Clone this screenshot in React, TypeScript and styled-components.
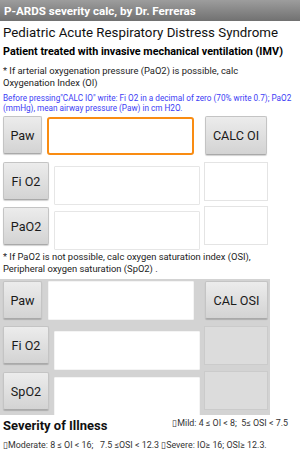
import React from 'react';
import styled, { createGlobalStyle } from 'styled-components';

const GlobalStyle = createGlobalStyle`
    html, body {
        margin: 0;
        padding: 0;
        background: #ffffff;
        font-family: Roboto, "Liberation Sans", sans-serif;
        color: #000;
    }
    * {
        box-sizing: border-box;
    }
`;

const Screen = styled.div`
    width: 300px;
    height: 471px;
    overflow: hidden;
    background: #fff;
`;

const TitleBar = styled.div`
    height: 21px;
    display: flex;
    align-items: center;
    padding: 0 4px;
    background: linear-gradient(#9d9d9d, #717171);
    color: #fff;
    font-weight: bold;
    font-size: 11.6px;
`;

const Content = styled.div`
    padding: 0 3px;
`;

const Heading = styled.div`
    font-size: 13.3px;
    line-height: 18px;
    margin-top: 3px;
    color: #111;
    white-space: nowrap;
`;

const SubHeading = styled.div`
    font-size: 10.8px;
    font-weight: bold;
    line-height: 14px;
    margin-top: 3px;
    white-space: nowrap;
`;

const Note = styled.div<{ $top: number }>`
    font-size: 9.4px;
    line-height: 12px;
    color: #222;
    margin-top: ${(p) => p.$top}px;
`;

const Hint = styled.div`
    font-size: 8.2px;
    line-height: 9.5px;
    color: #3c3cf5;
    margin-top: 5px;
`;

const Row = styled.div<{ $h: number }>`
    display: flex;
    align-items: flex-start;
    height: ${(p) => p.$h}px;
`;

const Button = styled.button<{ $w: number; $ml?: number }>`
    width: ${(p) => p.$w}px;
    height: 38px;
    margin-left: ${(p) => p.$ml ?? 0}px;
    padding: 0;
    flex: none;
    font-family: Roboto, "Liberation Sans", sans-serif;
    font-size: 12.6px;
    color: #1a1a1a;
    background: linear-gradient(#ececec, #d3d3d3);
    border: 1px solid #c4c4c4;
    border-bottom-color: #a9a9a9;
    border-radius: 2px;
    box-shadow: 0 1px 1px rgba(0, 0, 0, 0.18);
`;

const Input = styled.div<{ $w: number; $ml: number; $dy: number; $focus?: boolean; $bare?: boolean }>`
    width: ${(p) => p.$w}px;
    height: 39px;
    flex: none;
    margin-left: ${(p) => p.$ml}px;
    margin-top: ${(p) => p.$dy}px;
    background: #fff;
    border: ${(p) => (p.$focus ? '2px solid #f98c12' : p.$bare ? '1px solid #f4f4f4' : '1px solid #e6e6e6')};
    border-radius: ${(p) => (p.$focus ? '3px' : '1px')};
`;

const Result = styled.div<{ $dy: number; $gray?: boolean }>`
    width: 64px;
    height: 39px;
    flex: none;
    margin-left: 4px;
    margin-top: ${(p) => p.$dy}px;
    background: ${(p) => (p.$gray ? '#dcdcdc' : '#fff')};
    border: 1px solid ${(p) => (p.$gray ? '#cbcbcb' : '#e4e4e4')};
`;

const GrayPanel = styled.div`
    width: 270px;
    margin-left: -3px;
    margin-top: 4px;
    height: 136px;
    padding: 2px 0 0 3px;
    background: #d3d3d3;
    overflow: hidden;
`;

const Footer = styled.div`
    display: flex;
    align-items: flex-start;
    justify-content: space-between;
    margin-top: 2px;
`;

const Severity = styled.div`
    font-size: 13px;
    font-weight: bold;
    color: #111;
    line-height: 18px;
`;

const Small = styled.div<{ $top: number; $right?: number }>`
    font-size: 8.9px;
    line-height: 11px;
    color: #333;
    white-space: pre;
    margin-top: ${(p) => p.$top}px;
    margin-right: ${(p) => p.$right ?? 0}px;
`;

export default function App() {
    return (
        <Screen>
            <GlobalStyle />
            <TitleBar>P-ARDS severity calc, by Dr. Ferreras</TitleBar>
            <Content>
                <Heading>Pediatric Acute Respiratory Distress Syndrome</Heading>
                <SubHeading>Patient treated with invasive mechanical ventilation (IMV)</SubHeading>
                <Note $top={6}>
                    * If arterial oxygenation pressure (PaO2) is possible, calc
                    <br />
                    Oxygenation Index (OI)
                </Note>
                <Hint>
                    Before pressing"CALC IO" write: Fi O2 in a decimal of zero (70% write 0.7); PaO2
                    (mmHg), mean airway pressure (Paw) in cm H2O.
                </Hint>

                <div style={{ height: 3 }} />
                <Row $h={46}>
                    <Button $w={39}>Paw</Button>
                    <Input $w={147} $ml={5} $dy={1} $focus style={{ height: 38 }} />
                    <Button $w={62} $ml={11} style={{ height: 39 }}>CALC OI</Button>
                </Row>
                <Row $h={45}>
                    <Button $w={46}>Fi O2</Button>
                    <Input $w={146} $ml={5} $dy={4} />
                    <Result $dy={0} />
                </Row>
                <Row $h={44}>
                    <Button $w={46}>PaO2</Button>
                    <Input $w={146} $ml={5} $dy={4} />
                    <Result $dy={-1} />
                </Row>

                <Note $top={0}>
                    * If PaO2 is not possible, calc oxygen saturation index (OSI),
                    <br />
                    Peripheral oxygen saturation (SpO2) .
                </Note>

                <GrayPanel>
                    <Row $h={45}>
                        <Button $w={39}>Paw</Button>
                        <Input $w={146} $ml={6} $dy={0} $bare />
                        <Button $w={63} $ml={11} $dy={1}>CAL OSI</Button>
                    </Row>
                    <Row $h={46}>
                        <Button $w={46}>Fi O2</Button>
                        <Input $w={146} $ml={5} $dy={5} $bare />
                        <Result $dy={0} $gray />
                    </Row>
                    <Row $h={44}>
                        <Button $w={46}>SpO2</Button>
                        <Input $w={146} $ml={5} $dy={5} $bare />
                        <Result $dy={-1} $gray />
                    </Row>
                </GrayPanel>

                <Footer>
                    <Severity>Severity of Illness</Severity>
                    <Small $top={1} $right={9}>{'▯Mild: 4 ≤ OI < 8;  5≤ OSI < 7.5'}</Small>
                </Footer>
                <Small $top={5}>
                    {'▯Moderate: 8 ≤ OI < 16;   7.5 ≤OSI < 12.3 ▯Severe: IO≥ 16; OSI≥ 12.3.'}
                </Small>
            </Content>
        </Screen>
    );
}
